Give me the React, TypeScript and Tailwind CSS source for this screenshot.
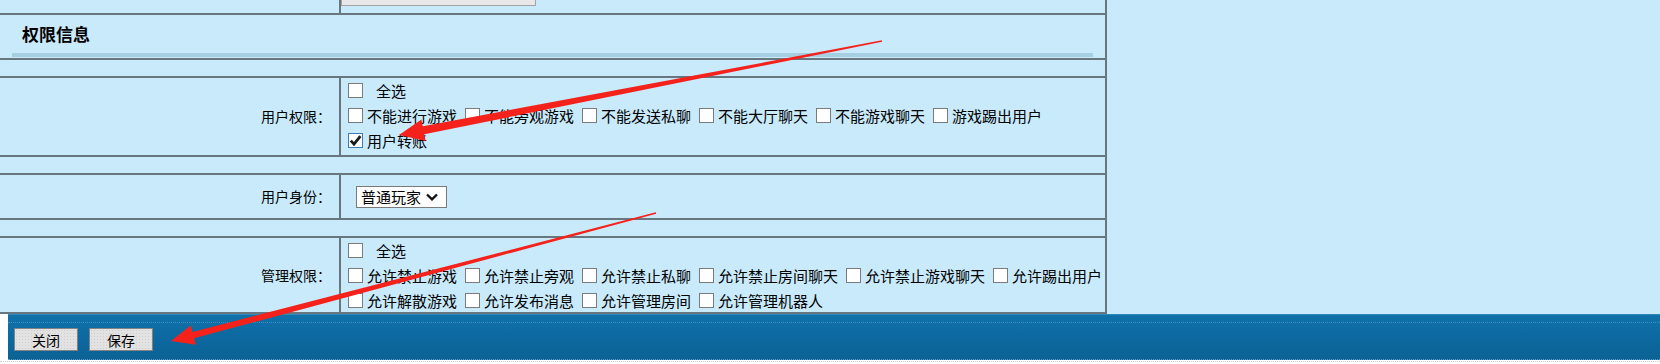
import React from "react";

/* ─── data ──────────────────────────────────────────── */
const userRows: { label: string; checked?: boolean }[][] = [
  [
    { label: "不能进行游戏" },
    { label: "不能旁观游戏" },
    { label: "不能发送私聊" },
    { label: "不能大厅聊天" },
    { label: "不能游戏聊天" },
    { label: "游戏踢出用户" },
  ],
  [{ label: "用户转账", checked: true }],
];

const adminRows: { label: string; checked?: boolean }[][] = [
  [
    { label: "允许禁止游戏" },
    { label: "允许禁止旁观" },
    { label: "允许禁止私聊" },
    { label: "允许禁止房间聊天" },
    { label: "允许禁止游戏聊天" },
    { label: "允许踢出用户" },
  ],
  [
    { label: "允许解散游戏" },
    { label: "允许发布消息" },
    { label: "允许管理房间" },
    { label: "允许管理机器人" },
  ],
];

/* ─── arrow geometry ────────────────────────────────── */
type P = [number, number];
const arrow = (tail: P, tip: P, w0: number, w1: number, headLen: number, headHalf: number) => {
  const dx = tip[0] - tail[0];
  const dy = tip[1] - tail[1];
  const len = Math.hypot(dx, dy);
  const ux = dx / len;
  const uy = dy / len;
  const nx = -uy;
  const ny = ux;
  const bx = tip[0] - ux * headLen;
  const by = tip[1] - uy * headLen;
  const pts: P[] = [
    [tail[0] + (nx * w0) / 2, tail[1] + (ny * w0) / 2],
    [bx + (nx * w1) / 2, by + (ny * w1) / 2],
    [bx + nx * headHalf, by + ny * headHalf],
    tip,
    [bx - nx * headHalf, by - ny * headHalf],
    [bx - (nx * w1) / 2, by - (ny * w1) / 2],
    [tail[0] - (nx * w0) / 2, tail[1] - (ny * w0) / 2],
  ];
  return pts.map((p) => p.map((v) => v.toFixed(1)).join(",")).join(" ");
};

/* ─── bits ──────────────────────────────────────────── */
const Box = ({ checked }: { checked?: boolean }) => (
  <span
    className={`inline-flex h-[15px] w-[15px] shrink-0 items-center justify-center border bg-white ${
      checked ? "border-[#3f7db6]" : "border-[#7b7b7b]"
    }`}
  >
    {checked && (
      <svg width="13" height="13" viewBox="0 0 13 13">
        <path d="M1.8 6.6 L5 10.2 L11.4 2.2" fill="none" stroke="#1a1a1a" strokeWidth="2.8" />
      </svg>
    )}
  </span>
);

const Item = ({ label, checked }: { label: string; checked?: boolean }) => (
  <span className="mr-[8px] flex shrink-0 items-center whitespace-nowrap">
    <Box checked={checked} />
    <span className="ml-[4px]">{label}</span>
  </span>
);

const Line = ({ children }: { children: React.ReactNode }) => (
  <div className="flex h-[25px] items-center pl-[7px] text-[15px] leading-none">{children}</div>
);

const SelectAll = () => (
  <Line>
    <Box />
    <span className="ml-[13px]">全选</span>
  </Line>
);

const Label = ({ text }: { text: string }) => (
  <div className="flex w-[341px] shrink-0 items-center justify-end border-r-2 border-[#67767f] pr-[8px] text-[14px]">
    {text}
  </div>
);

const Btn = ({ text }: { text: string }) => (
  <button
    type="button"
    className="flex h-[23px] w-[64px] items-center justify-center border border-[#838383] bg-[#e2e2e2] bg-[radial-gradient(#cfcfcf_0.6px,transparent_0.8px)] bg-size-[3px_3px] text-[14px] leading-none text-black"
  >
    {text}
  </button>
);

/* ─── main ──────────────────────────────────────────── */
export default function App() {
  return (
    <div className="relative h-[364px] w-[1660px] overflow-hidden bg-[#c8eafb] font-['Noto_Sans_CJK_SC','Noto_Sans',sans-serif] text-black">
      <div className="w-[1107px] border-r-2 border-[#67767f]">
        {/* tail of previous section */}
        <div className="flex h-[15px] border-b-2 border-[#67767f]">
          <div className="w-[341px] shrink-0 border-r-2 border-[#67767f]" />
          <div className="h-[6px] w-[195px] border-x border-b border-[#a2a2a2] bg-[#e8e8e8]" />
        </div>

        {/* section title */}
        <div className="flex h-[45px] flex-col border-b-2 border-[#67767f] px-[12px]">
          <div className="flex h-[36px] items-center pl-[10px] text-[17px] font-bold leading-none">权限信息</div>
          <div className="mt-[2px] h-[4px] bg-[#a6cfe4]" />
        </div>

        <div className="h-[18px] border-b-2 border-[#67767f]" />

        {/* user permissions */}
        <div className="flex h-[79px] border-b-2 border-[#67767f]">
          <Label text="用户权限：" />
          <div className="flex-1">
            <SelectAll />
            {userRows.map((row, i) => (
              <Line key={i}>
                {row.map((it) => (
                  <Item key={it.label} label={it.label} checked={it.checked} />
                ))}
              </Line>
            ))}
          </div>
        </div>

        <div className="h-[18px] border-b-2 border-[#67767f]" />

        {/* identity */}
        <div className="flex h-[45px] border-b-2 border-[#67767f]">
          <Label text="用户身份：" />
          <div className="flex flex-1 items-center pl-[15px]">
            <div className="flex h-[22px] w-[91px] items-center justify-between border border-[#7a7a7a] bg-white pl-[4px] pr-[8px] text-[15px] leading-none">
              普通玩家
              <svg width="12" height="8" viewBox="0 0 12 8">
                <path d="M1 1.5 L6 6.3 L11 1.5" fill="none" stroke="#111" strokeWidth="2.4" />
              </svg>
            </div>
          </div>
        </div>

        <div className="h-[18px] border-b-2 border-[#67767f]" />

        {/* admin permissions */}
        <div className="flex h-[76px] border-b-2 border-[#67767f]">
          <Label text="管理权限：" />
          <div className="flex-1">
            <SelectAll />
            {adminRows.map((row, i) => (
              <Line key={i}>
                {row.map((it) => (
                  <Item key={it.label} label={it.label} checked={it.checked} />
                ))}
              </Line>
            ))}
          </div>
        </div>
      </div>

      {/* footer bar */}
      <div className="h-[50px] bg-white">
        <div className="ml-[8px] flex h-[46px] flex-col bg-linear-to-b from-[#1072aa] via-[#0d69a0] to-[#0b6294]">
          <div className="h-[1px] bg-[#3088ba]" />
          <div className="h-[7px]" />
          <div className="border-t border-dotted border-[#3f90c0]" />
          <div className="mt-[5px] flex gap-[11px] pl-[6px]">
            <Btn text="关闭" />
            <Btn text="保存" />
          </div>
          <div className="flex-1" />
          <div className="border-b border-dotted border-[#5a9dc6]" />
        </div>
        <div className="mt-[1px] border-t border-dotted border-[#cfcfcf]" />
      </div>

      {/* red annotation arrows */}
      <svg className="pointer-events-none absolute inset-0" width="1660" height="364">
        <polygon points={arrow([882, 41], [399, 135], 1.5, 8, 25, 11)} fill="#f5221c" />
        <polygon points={arrow([656, 213], [171, 341], 1.5, 6.5, 23, 10)} fill="#f5221c" />
      </svg>
    </div>
  );
}
